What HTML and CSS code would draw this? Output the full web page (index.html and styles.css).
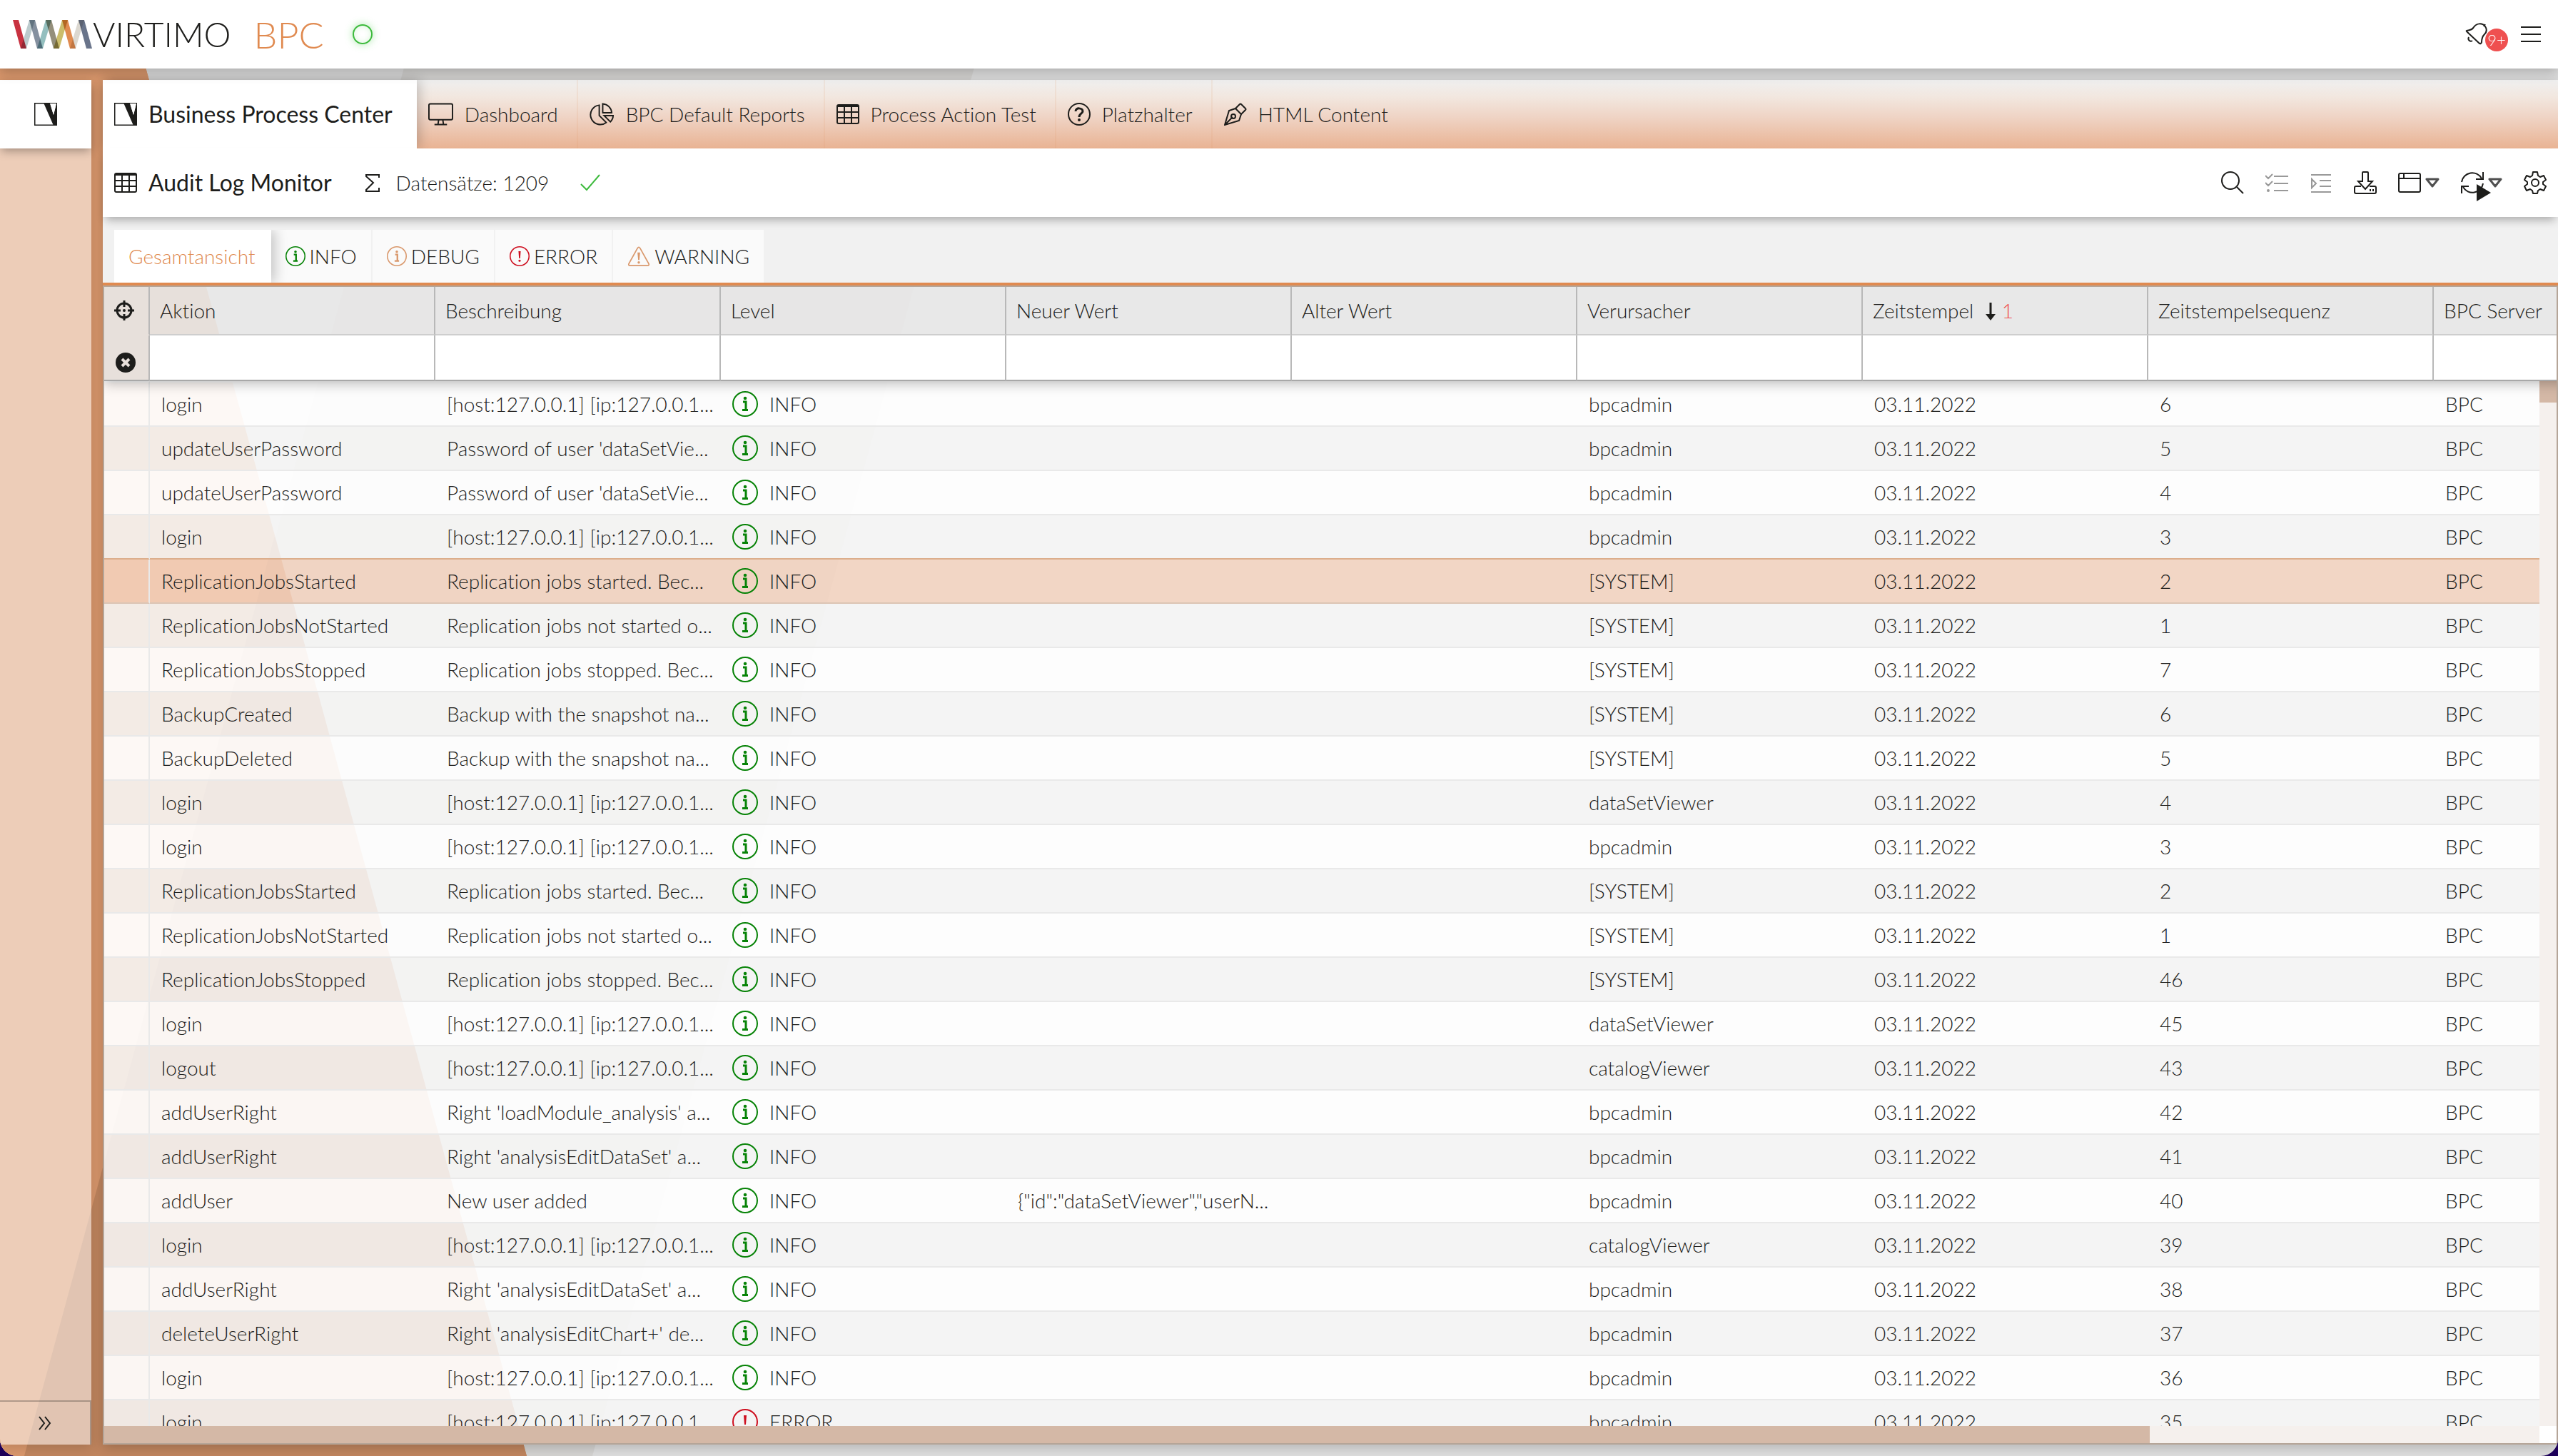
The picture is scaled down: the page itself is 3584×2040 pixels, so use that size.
FILE: index.html
```html
<!DOCTYPE html>
<html lang="de">
<head>
    <meta charset="UTF-8">
    <meta name="viewport" content="width=device-width, initial-scale=1.0">
    <title>Virtimo BPC - Audit Log Monitor</title>
    <link rel="stylesheet" href="styles.css">
</head>
<body>
    <!-- Icons -->
    <svg class="sprite" aria-hidden="true">
        <symbol id="i-virtimo" viewBox="0 0 32 32">
            <path d="M.5.5h31v31H.5z" fill="none" stroke="#1d1d1b"/>
            <path d="M13 0h9l5 17 4-16h1v31h-5z" fill="#1d1d1b" stroke="none"/>
            <path d="M22 1h9l-4 16z" fill="#fff" stroke="none"/>
        </symbol>
        <symbol id="i-table" viewBox="0 0 32 32">
            <rect x="1" y="3" width="30" height="26" rx="2"/>
            <path d="M1 13h30M1 21h30M11 6v23M21 6v23"/>
            <path d="M2 3h28v3H2z" fill="currentColor" stroke="none"/>
        </symbol>
        <symbol id="i-monitor" viewBox="0 0 36 32">
            <rect x="1" y="1" width="34" height="23" rx="2"/>
            <path d="M15 24l-1 7M21 24l1 7M9 31h18"/>
        </symbol>
        <symbol id="i-pie" viewBox="0 0 36 32">
            <path d="M14 3a14 14 0 1 0 10 25L14 18z"/>
            <path d="M19 1a14 14 0 0 1 13 13H19z"/>
            <path d="M21 18h13a13 13 0 0 1-4 9z"/>
        </symbol>
        <symbol id="i-question" viewBox="0 0 32 32">
            <circle cx="16" cy="16" r="15"/>
            <path d="M11 12c0-6 10-5 10 0 0 3-5 3-5 8" stroke-width="3"/>
            <circle cx="16" cy="24" r="1" fill="currentColor"/>
        </symbol>
        <symbol id="i-pen" viewBox="0 0 32 32">
            <path d="M1 31L7 11l9-3 8 8-3 9L1 31z"/>
            <path d="M16 8l6-6q1-1 2 0l6 6q1 1 0 2l-6 6M2 30l10-10"/>
            <circle cx="13" cy="19" r="3"/>
        </symbol>
        <symbol id="i-sigma" viewBox="0 0 22 28">
            <path d="M20 7V3H2v2l10 9L2 24v2h18v-5"/>
        </symbol>
        <symbol id="i-check" viewBox="0 0 28 28">
            <path d="M1 16l8 8L27 3"/>
        </symbol>
        <symbol id="i-info" viewBox="0 0 36 36">
            <circle cx="18" cy="18" r="17"/>
            <path d="M15 15h4v11M14 26.500h8" stroke-width="3"/>
            <circle cx="18" cy="10" r="2.300" fill="currentColor" stroke="none"/>
        </symbol>
        <symbol id="i-error" viewBox="0 0 36 36">
            <circle cx="18" cy="18" r="17"/>
            <path d="M16 9h4l-1 13h-2z" fill="currentColor" stroke="none"/>
            <circle cx="18" cy="26" r="2" fill="currentColor" stroke="none"/>
        </symbol>
        <symbol id="i-warning" viewBox="0 0 36 32">
            <path d="M16 3q2-3 4 0l14 25q1 3-2 3H4q-3 0-2-3z"/>
            <path d="M17 11h2l-1 11z" fill="currentColor"/>
            <circle cx="18" cy="26" r="1" fill="currentColor"/>
        </symbol>
        <symbol id="i-search" viewBox="0 0 32 32">
            <circle cx="13" cy="13" r="12"/>
            <path d="M22 22l9 9"/>
        </symbol>
        <symbol id="i-checklist" viewBox="0 0 32 32">
            <path d="M12 7h20M12 17h20M12 27h20M0 6l4 4 6-6M0 16l4 4 6-6"/>
            <circle cx="4" cy="27" r="1" fill="currentColor"/>
        </symbol>
        <symbol id="i-indent" viewBox="0 0 32 32">
            <path d="M2 5h28M14 13h16M14 21h16M2 29h28M3 11v12l6-6z"/>
        </symbol>
        <symbol id="i-download" viewBox="0 0 32 32">
            <path d="M10 21H3q-2 0-2 2v6q0 2 2 2h26q2 0 2-2v-6q0-2-2-2h-7"/>
            <path d="M12 2q0-1 1-1h6q1 0 1 1v12h6L16 25 6 14h6z"/>
            <path d="M23 25v3M27 25v3"/>
        </symbol>
        <symbol id="i-window" viewBox="0 0 32 32">
            <rect x="1" y="3" width="30" height="26" rx="2"/>
            <path d="M1 10h30M8 3v7"/>
        </symbol>
        <symbol id="i-caret" viewBox="0 0 20 14">
            <path d="M2 2h16l-8 10z" stroke-width="3" stroke-linejoin="round"/>
        </symbol>
        <symbol id="i-refresh" viewBox="0 0 32 32">
            <path d="M1 15A15 15 0 0 1 29 10M31 17A15 15 0 0 1 3 22M31 1v10H21M1 31V21h10"/>
        </symbol>
        <symbol id="i-gear" viewBox="0 0 32 32">
            <circle cx="16" cy="16" r="5"/>
            <path d="M13 1h6l1 5 3 2 5-2 3 6-4 3v3l4 3-3 6-5-2-3 2-1 4h-6l-1-4-3-2-5 2-3-6 4-3v-3l-4-3 3-6 5 2 3-2z" stroke-linejoin="round"/>
        </symbol>
        <symbol id="i-bell" viewBox="0 0 32 32">
            <path d="M2 11q8-1 10-5C16 0 24 0 28 5q4 6-1 11-4 4-4 11-1 4-4 1L3 13q-2-2-1-2z" />
            <path d="M26 5l2-3M5 20c-2 4 2 7 5 5"/>
        </symbol>
        <symbol id="i-menu" viewBox="0 0 28 28">
            <path d="M0 4h28M0 14h28M0 24h28"/>
        </symbol>
        <symbol id="i-target" viewBox="0 0 28 28">
            <circle cx="14" cy="14" r="10" stroke-width="3"/>
            <path d="M14 0v9M14 19v9M0 14h9M19 14h9" stroke-width="3"/>
            <circle cx="14" cy="14" r="1" fill="currentColor"/>
        </symbol>
        <symbol id="i-clear" viewBox="0 0 28 28">
            <circle cx="14" cy="14" r="14" fill="currentColor" stroke="none"/>
            <path d="M9 9l10 10M19 9L9 19" stroke="#e7dfda" stroke-width="4"/>
        </symbol>
        <symbol id="i-sort" viewBox="0 0 16 28">
            <path d="M8 2v20" stroke-width="3"/>
            <path d="M1 18h14l-7 9z" fill="currentColor" stroke="none"/>
        </symbol>
        <symbol id="i-expand" viewBox="0 0 20 20">
            <path d="M2 1l7 9-7 9M10 1l7 9-7 9"/>
        </symbol>
    </svg>

    <div class="app">
        <svg class="backdrop" viewBox="0 0 3584 2040" preserveAspectRatio="none" aria-hidden="true">
            <path d="M0 0h178l560 2040H0z" fill="#d9976c"/>
            <path d="M592 0h799L830 2040H34z" fill="#645f3c" fill-opacity=".08"/>
            <path d="M0 0h178l207 750L34 2040H0z" fill="#d9976c"/>
            <path d="M385 750l353 1290H34z" fill="#c0855e"/>
        </svg>

        <header class="topbar">
            <svg class="logo" viewBox="0 0 112 40" aria-hidden="true">
                <path d="M0 0h8l11 40h-8z" fill="#c83240"/>
                <path d="M23 0h8L19 40h-8z" fill="#bccbcd"/>
                <path d="M23 0h8l11 40h-8z" fill="#84909f"/>
                <path d="M46 0h8L42 40h-8z" fill="#94bfbf"/>
                <path d="M46 0h8l11 40h-8z" fill="#948f7b"/>
                <path d="M69 0h8L65 40h-8z" fill="#cbbd6c"/>
                <path d="M69 0h8l11 40h-8z" fill="#e08b50"/>
                <path d="M92 0h8L88 40h-8z" fill="#dcd8d0"/>
                <path d="M92 0h8l11 40h-8z" fill="#69748a"/>
            </svg>
            <span class="brand">VIRTIMO</span>
            <span class="product">BPC</span>
            <span class="status"></span>
            <div class="topbar-actions">
                <button class="bell" aria-label="Benachrichtigungen">
                    <svg class="icon"><use href="#i-bell"/></svg>
                    <span class="badge">9+</span>
                </button>
                <button aria-label="Menü"><svg class="icon-s"><use href="#i-menu"/></svg></button>
            </div>
        </header>

        <div class="workspace">
            <nav class="sidebar">
                <button class="side-item" aria-label="Business Process Center"><svg class="icon"><use href="#i-virtimo"/></svg></button>
                <button class="side-expand" aria-label="Ausklappen"><svg class="icon-xs"><use href="#i-expand"/></svg></button>
            </nav>

            <main class="main">
                <nav class="tabs">
                    <a class="tab active" href="#"><svg class="icon"><use href="#i-virtimo"/></svg>Business Process Center</a>
                    <a class="tab" href="#"><svg class="icon-w"><use href="#i-monitor"/></svg>Dashboard</a>
                    <a class="tab" href="#"><svg class="icon-w"><use href="#i-pie"/></svg>BPC Default Reports</a>
                    <a class="tab" href="#"><svg class="icon"><use href="#i-table"/></svg>Process Action Test</a>
                    <a class="tab" href="#"><svg class="icon"><use href="#i-question"/></svg>Platzhalter</a>
                    <a class="tab" href="#"><svg class="icon"><use href="#i-pen"/></svg>HTML Content</a>
                </nav>

                <div class="titlebar">
                    <svg class="icon"><use href="#i-table"/></svg>
                    <h1>Audit Log Monitor</h1>
                    <svg class="sigma"><use href="#i-sigma"/></svg>
                    <span>Datensätze: 1209</span>
                    <svg class="check"><use href="#i-check"/></svg>
                    <div class="tools">
                        <button aria-label="Suchen"><svg class="icon"><use href="#i-search"/></svg></button>
                        <button aria-label="Auswahl" disabled><svg class="icon"><use href="#i-checklist"/></svg></button>
                        <button aria-label="Details" disabled><svg class="icon"><use href="#i-indent"/></svg></button>
                        <button aria-label="Exportieren"><svg class="icon"><use href="#i-download"/></svg></button>
                        <button aria-label="Ansicht"><svg class="icon"><use href="#i-window"/></svg><svg class="caret"><use href="#i-caret"/></svg></button>
                        <button class="refresh" aria-label="Aktualisieren"><svg class="icon"><use href="#i-refresh"/></svg><svg class="caret"><use href="#i-caret"/></svg></button>
                        <button aria-label="Einstellungen"><svg class="icon"><use href="#i-gear"/></svg></button>
                    </div>
                </div>

                <div class="views">
                    <button class="view active">Gesamtansicht</button>
                    <button class="view"><svg class="icon-s info"><use href="#i-info"/></svg>INFO</button>
                    <button class="view"><svg class="icon-s debug"><use href="#i-info"/></svg>DEBUG</button>
                    <button class="view"><svg class="icon-s error"><use href="#i-error"/></svg>ERROR</button>
                    <button class="view"><svg class="warn debug"><use href="#i-warning"/></svg>WARNING</button>
                </div>

                <div class="grid">
                    <div class="grid-view">
                        <table>
                            <colgroup>
                                <col class="col-select">
                                <col span="9" class="col-data">
                            </colgroup>
                            <thead>
                                <tr class="titles">
                                    <th><button aria-label="Zur Auswahl"><svg class="icon-s"><use href="#i-target"/></svg></button></th>
                                    <th>Aktion</th>
                                    <th>Beschreibung</th>
                                    <th>Level</th>
                                    <th>Neuer Wert</th>
                                    <th>Alter Wert</th>
                                    <th>Verursacher</th>
                                    <th>Zeitstempel <svg class="sort"><use href="#i-sort"/></svg><span class="sort-no">1</span></th>
                                    <th>Zeitstempelsequenz</th>
                                    <th>BPC Server</th>
                                </tr>
                                <tr class="filters">
                                    <th><button aria-label="Filter löschen"><svg class="icon-s"><use href="#i-clear"/></svg></button></th>
                                    <td><input type="text" aria-label="Aktion"></td>
                                    <td><input type="text" aria-label="Beschreibung"></td>
                                    <td><input type="text" aria-label="Level"></td>
                                    <td><input type="text" aria-label="Neuer Wert"></td>
                                    <td><input type="text" aria-label="Alter Wert"></td>
                                    <td><input type="text" aria-label="Verursacher"></td>
                                    <td><input type="text" aria-label="Zeitstempel"></td>
                                    <td><input type="text" aria-label="Zeitstempelsequenz"></td>
                                    <td><input type="text" aria-label="BPC Server"></td>
                                </tr>
                            </thead>
                            <tbody id="rows">
                                <!-- Zeilen werden hier generiert -->
                            </tbody>
                        </table>
                        <div class="scroll-y"><div class="thumb"></div></div>
                    </div>
                    <div class="scroll-x"><div class="thumb"></div></div>
                </div>
            </main>
        </div>
    </div>

    <script>
        // gekürzte Beschreibungen
        const host = "[host:127.0.0.1] [ip:127.0.0.1...";
        const password = "Password of user 'dataSetVie...";
        const started = "Replication jobs started. Bec...";
        const notStarted = "Replication jobs not started o...";
        const stopped = "Replication jobs stopped. Bec...";
        const backup = "Backup with the snapshot na...";

        // Aktion, Beschreibung, Verursacher, Sequenz
        const entries = [
            ["login", host, "bpcadmin", 6],
            ["updateUserPassword", password, "bpcadmin", 5],
            ["updateUserPassword", password, "bpcadmin", 4],
            ["login", host, "bpcadmin", 3],
            ["ReplicationJobsStarted", started, "[SYSTEM]", 2],
            ["ReplicationJobsNotStarted", notStarted, "[SYSTEM]", 1],
            ["ReplicationJobsStopped", stopped, "[SYSTEM]", 7],
            ["BackupCreated", backup, "[SYSTEM]", 6],
            ["BackupDeleted", backup, "[SYSTEM]", 5],
            ["login", host, "dataSetViewer", 4],
            ["login", host, "bpcadmin", 3],
            ["ReplicationJobsStarted", started, "[SYSTEM]", 2],
            ["ReplicationJobsNotStarted", notStarted, "[SYSTEM]", 1],
            ["ReplicationJobsStopped", stopped, "[SYSTEM]", 46],
            ["login", host, "dataSetViewer", 45],
            ["logout", host, "catalogViewer", 43],
            ["addUserRight", "Right 'loadModule_analysis' a...", "bpcadmin", 42],
            ["addUserRight", "Right 'analysisEditDataSet' a...", "bpcadmin", 41],
            ["addUser", "New user added", "bpcadmin", 40],
            ["login", host, "catalogViewer", 39],
            ["addUserRight", "Right 'analysisEditDataSet' a...", "bpcadmin", 38],
            ["deleteUserRight", "Right 'analysisEditChart+' de...", "bpcadmin", 37],
            ["login", host, "bpcadmin", 36],
            ["login", host, "bpcadmin", 35]
        ];
        const selected = 4;

        const rows = document.getElementById("rows");

        entries.forEach(([action, text, user, seq], i) => {
            const level = seq === 35 ? "error" : "info";
            const newValue = action === "addUser" ? '{"id":"dataSetViewer","userN...' : "";
            const row = document.createElement("tr");
            if (i === selected) row.className = "selected";
            if (i === selected - 1) row.className = "before-selected";
            row.innerHTML = `
                <td></td>
                <td>${action}</td>
                <td>${text}</td>
                <td><div class="level"><svg class="icon-l ${level}"><use href="#i-${level}"/></svg>${level.toUpperCase()}</div></td>
                <td>${newValue}</td>
                <td></td>
                <td>${user}</td>
                <td>03.11.2022</td>
                <td>${seq}</td>
                <td>BPC</td>
            `;
            rows.appendChild(row);
        });
    </script>
</body>
</html>
```
FILE: styles.css
```css
* {
    box-sizing: border-box;
}
body {
    margin: 0;
    background: #1d0059;
    color: #1d1d1b;
    font-family: Lato, "Liberation Sans", sans-serif;
    font-size: 28px;
    font-weight: 300;
    font-variant-ligatures: none;
    line-height: 36px;
}
button, input {
    margin: 0;
    padding: 0;
    border: none;
    background: none;
    color: inherit;
    font: inherit;
}
button {
    display: flex;
    align-items: center;
    justify-content: center;
    cursor: pointer;
}
button:disabled {
    color: #999;
}
svg {
    display: block;
    flex: none;
    fill: none;
    stroke: currentColor;
    stroke-width: 2;
}
.sprite {
    position: absolute;
    width: 0;
    height: 0;
}
.icon {
    width: 32px;
    height: 32px;
}
.icon-w {
    width: 35px;
    height: 32px;
}
.icon-l {
    width: 36px;
    height: 36px;
}
.icon-s {
    width: 28px;
    height: 28px;
}
.icon-xs {
    width: 20px;
    height: 20px;
}
.info {
    color: #078307;
}
.debug {
    color: #d9986c;
}
.error {
    color: #ce1020;
}
.app {
    position: relative;
    display: flex;
    flex-direction: column;
    height: 100vh;
    overflow: hidden;
    border-radius: 0 0 24px 24px;
    background: #dedede;
}
.backdrop {
    position: absolute;
    inset: 0;
    width: 100%;
    height: 100%;
    stroke: none;
}

/* Kopfzeile */
.topbar {
    position: relative;
    z-index: 3;
    display: flex;
    align-items: center;
    flex: none;
    height: 96px;
    padding: 0 24px 0 18px;
    background: #fff;
    box-shadow: 0 4px 16px rgba(0, 0, 0, 0.25);
}
.logo {
    width: 112px;
    height: 40px;
    stroke: none;
}
.logo path {
    mix-blend-mode: multiply;
}
.brand {
    font-size: 48px;
    line-height: 60px;
}
.product {
    margin-left: 32px;
    color: #e08a50;
    font-size: 52px;
    line-height: 60px;
}
.status {
    width: 28px;
    height: 28px;
    margin-left: 40px;
    border: 2px solid #3cba3c;
    border-radius: 50%;
    box-shadow: 0 0 12px rgba(60, 200, 60, 0.4), inset 0 0 8px rgba(60, 200, 60, 0.2);
}
.topbar-actions {
    display: flex;
    align-items: center;
    gap: 46px;
    margin-left: auto;
}
.bell {
    position: relative;
}
.badge {
    position: absolute;
    top: 8px;
    left: 28px;
    width: 32px;
    height: 32px;
    border-radius: 50%;
    background: #ef5050;
    color: #fff;
    font-size: 22px;
    line-height: 32px;
    text-align: center;
}

.workspace {
    position: relative;
    display: flex;
    flex: 1;
    gap: 16px;
    min-height: 0;
    padding: 16px 0;
}

/* Seitenleiste */
.sidebar {
    display: flex;
    flex-direction: column;
    justify-content: space-between;
    flex: none;
    width: 128px;
    background: rgba(255, 255, 255, 0.52);
    box-shadow: 0 4px 16px rgba(0, 0, 0, 0.15);
}
.side-item {
    height: 96px;
    background: #fff;
    box-shadow: 0 6px 12px -2px rgba(0, 0, 0, 0.3);
}
.side-expand {
    height: 62px;
    border-top: 2px solid rgba(0, 0, 0, 0.25);
    border-right: 2px solid rgba(0, 0, 0, 0.25);
}
.main {
    display: flex;
    flex-direction: column;
    flex: 1;
    min-width: 0;
    box-shadow: 0 4px 16px rgba(0, 0, 0, 0.2);
}

/* Reiter */
.tabs {
    display: flex;
    flex: none;
    height: 96px;
    background: linear-gradient(rgba(240, 240, 240, 0.97), #f2e7df 25%, #efd3c4 55%, #e9b393);
}
.tab {
    position: relative;
    display: flex;
    align-items: center;
    gap: 16px;
    padding: 0 26px 0 16px;
    border-right: 2px solid rgba(224, 150, 100, 0.12);
    color: inherit;
    text-decoration: none;
}
.tab:last-child {
    border-right: none;
}
.tab.active {
    z-index: 1;
    padding-right: 34px;
    border-right: none;
    background: #fff;
    box-shadow: 4px 0 16px rgba(0, 0, 0, 0.2);
    font-size: 32px;
    font-weight: 400;
}
.titlebar {
    position: relative;
    z-index: 2;
    display: flex;
    align-items: center;
    flex: none;
    height: 96px;
    padding: 0 16px;
    background: #fff;
    box-shadow: 0 8px 12px -4px rgba(0, 0, 0, 0.3);
}
.titlebar h1 {
    margin: 0 46px 0 16px;
    font-size: 32px;
    font-weight: 400;
}
.sigma {
    width: 22px;
    height: 28px;
    margin-right: 22px;
}
.check {
    width: 28px;
    height: 28px;
    margin-left: 44px;
    color: #3cba3c;
}
.tools {
    display: flex;
    gap: 30px;
    margin-left: auto;
}
.tools button {
    gap: 6px;
}
.refresh {
    position: relative;
}
.refresh::after {
    content: "";
    position: absolute;
    top: 18px;
    left: 22px;
    border: 12px solid transparent;
    border-right: none;
    border-left: 20px solid #1d1d1b;
}
.caret {
    width: 20px;
    height: 14px;
    color: #505050;
}

/* Ansichten */
.views {
    display: flex;
    flex: none;
    height: 96px;
    padding: 18px 16px 0;
    border-bottom: 4px solid #e08a50;
    background: #f1f1f1;
}
.view {
    gap: 6px;
    padding: 0 20px;
    border-right: 2px solid #f1f1f1;
    background: #fafafa;
}
.view.active {
    position: relative;
    padding-right: 22px;
    border-right: none;
    background: #fff;
    box-shadow: 6px 0 16px rgba(0, 0, 0, 0.2);
    clip-path: inset(0 -24px 0 0);
    color: #e08a50;
}
.warn {
    width: 32px;
    height: 28px;
}

/* Tabelle */
.grid {
    display: flex;
    flex-direction: column;
    flex: 1;
    min-height: 0;
    border: 2px solid #b5a598;
}
.grid-view {
    position: relative;
    flex: 1;
    min-height: 0;
    overflow: hidden;
}
table {
    width: 3664px;
    table-layout: fixed;
    border-collapse: separate;
    border-spacing: 0;
}
.col-select {
    width: 64px;
}
.col-data {
    width: 400px;
}
thead {
    position: relative;
    z-index: 1;
    box-shadow: 0 4px 16px rgba(0, 0, 0, 0.25);
}
th {
    padding: 0 14px;
    border-right: 2px solid #b8b8b8;
    background: rgba(232, 232, 232, 0.89);
    font-weight: 300;
    text-align: left;
}
.titles th {
    height: 68px;
    border-bottom: 2px solid #cecece;
}
.titles th:first-child {
    border-bottom-color: transparent;
}
.filters th, .filters td {
    height: 64px;
    border-bottom: 2px solid #a8a8a8;
}
.filters th {
    padding: 0 16px 10px;
    vertical-align: bottom;
}
.filters td {
    padding: 0;
    border-right: 2px solid #b8b8b8;
    background: #fff;
}
.filters input {
    display: block;
    width: 100%;
    height: 62px;
    padding: 0 14px;
    outline: none;
}
.sort {
    display: inline-block;
    width: 16px;
    height: 28px;
    margin: 0 8px;
    vertical-align: -4px;
}
.sort-no {
    color: #ef5050;
}
tbody td {
    height: 62px;
    padding: 0 0 0 16px;
    border-bottom: 2px solid #e9e9e9;
    background: rgba(255, 255, 255, 0.93);
    background-clip: padding-box;
    white-space: nowrap;
}
tbody td:first-child {
    border-right: 2px solid #e9e9e9;
}
tbody tr:first-child td {
    height: 64px;
    border-top: 2px solid #fafafa;
}
tbody tr:nth-child(even) td {
    background-color: rgba(247, 247, 247, 0.87);
}
tbody .before-selected td {
    border-bottom-color: #dcae8c;
}
tbody .selected td {
    border-bottom-color: #dcc5b5;
    background-color: rgba(245, 212, 192, 0.84);
}
.level {
    display: flex;
    align-items: center;
    gap: 16px;
}
.scroll-y {
    position: absolute;
    top: 132px;
    right: 0;
    bottom: 0;
    width: 24px;
    background: #f5f0ed;
}
.scroll-y .thumb {
    height: 30px;
    background: #d4b8a6;
}
.scroll-x {
    flex: none;
    height: 24px;
    border-right: 24px solid #fff;
    background: #f5f0ed;
}
.scroll-x .thumb {
    width: 84%;
    height: 100%;
    background: #d4b8a6;
}
```
